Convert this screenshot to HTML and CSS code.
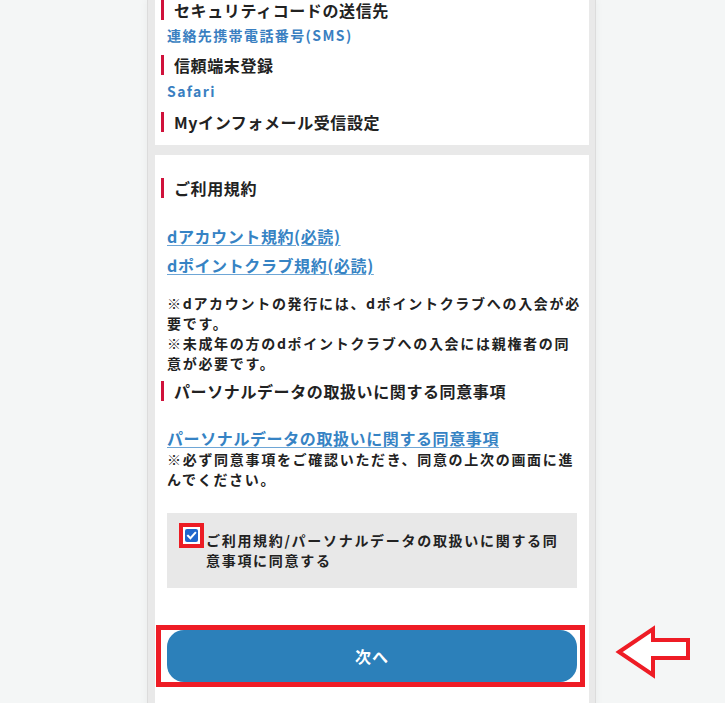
FILE: index.html
```html
<!DOCTYPE html>
<html lang="ja">
<head>
<meta charset="utf-8">
<title>dアカウント 確認</title>
<link rel="stylesheet" href="styles.css">
</head>
<body>
<div class="page">
  <div class="wrap">
    <section class="card card-info">
      <h2 class="head head-first">セキュリティコードの送信先</h2>
      <p class="val val-first">連絡先携帯電話番号(SMS)</p>
      <h2 class="head head-second">信頼端末登録</h2>
      <p class="val">Safari</p>
      <h2 class="head">Myインフォメール受信設定</h2>
    </section>
    <section class="card card-terms">
      <h2 class="head terms-head">ご利用規約</h2>
      <ul class="links">
        <li><a class="link" href="#">dアカウント規約(必読)</a></li>
        <li><a class="link" href="#">dポイントクラブ規約(必読)</a></li>
      </ul>
      <p class="note note-terms">※dアカウントの発行には、dポイントクラブへの入会が必要です。<br>※未成年の方のdポイントクラブへの入会には親権者の同意が必要です。</p>
      <h2 class="head personal-head">パーソナルデータの取扱いに関する同意事項</h2>
      <a class="link link-personal" href="#">パーソナルデータの取扱いに関する同意事項</a>
      <p class="note note-personal">※必ず同意事項をご確認いただき、同意の上次の画面に進んでください。</p>
      <label class="agree">
        <span class="ring">
          <svg class="check" viewBox="0 0 13 13" width="13" height="13" aria-hidden="true">
            <rect x="0" y="0" width="13" height="13" rx="2" fill="#1f66cc"/>
            <path d="M3 6.8 L5.4 9.2 L10.2 3.9" fill="none" stroke="#fff" stroke-width="2" stroke-linecap="square"/>
          </svg>
        </span>
        <span class="agree-text">ご利用規約/パーソナルデータの取扱いに関する同意事項に同意する</span>
      </label>
      <div class="next-frame">
        <button class="next" type="button">次へ</button>
      </div>
    </section>
  </div>
  <svg class="arrow" viewBox="600 615 100 85" width="100" height="85" aria-hidden="true">
    <polygon points="619,652 653,629 653,640 688,640 688,658 653,658 653,675" fill="#fff" stroke="#ee1c25" stroke-width="4" stroke-linejoin="miter" stroke-miterlimit="10"/>
  </svg>
</div>
</body>
</html>
```

FILE: styles.css
```css
html, body {
  margin: 0;
  padding: 0;
}
body {
  background: #f4f6f6;
  font-family: "Noto Sans CJK JP", "Noto Sans", sans-serif;
  color: #222;
  overflow: hidden;
}
.page {
  position: relative;
  min-height: 703px;
}
.wrap {
  margin-left: 147px;
  width: 449px;
  box-sizing: border-box;
  background: #e9e9e9;
  border-left: 1px solid #dcdcdc;
  border-right: 1px solid #dcdcdc;
  box-shadow: 0 0 8px rgba(0, 0, 0, 0.05);
  padding: 0 6px 0 7px;
  display: flex;
  flex-direction: column;
  gap: 10px;
}
.card {
  background: #fff;
  padding: 0 12px;
}
.card-info {
  padding-bottom: 13px;
}
.card-terms {
  padding-top: 23px;
  padding-bottom: 40px;
}
.head {
  margin: 11px 0 0 -6px;
  border-left: 3px solid #d0123b;
  padding-left: 10px;
  font-size: 16px;
  line-height: 20px;
  font-weight: 700;
  letter-spacing: 0.6px;
  color: #222;
}
.head-first {
  margin-top: 0;
}
.head-second {
  margin-top: 10px;
}
.terms-head {
  margin-top: 0;
}
.personal-head {
  margin-top: 8px;
}
.val {
  margin: 6px 0 0;
  font-size: 14px;
  line-height: 20px;
  font-weight: 700;
  letter-spacing: 1.4px;
  color: #3a7fc1;
}
.val-first {
  margin-top: 5px;
}
.links {
  list-style: none;
  margin: 24px 0 0;
  padding: 0;
}
.links li {
  line-height: 29px;
}
.link {
  font-size: 16px;
  font-weight: 700;
  letter-spacing: 0.6px;
  color: #3683c4;
  text-decoration: underline;
  text-decoration-color: #6ea6d6;
  text-underline-offset: 2px;
}
.link-personal {
  display: block;
  margin-top: 27px;
  line-height: 20px;
}
.note {
  margin: 0 -6px 0 0;
  font-size: 14px;
  line-height: 20px;
  font-weight: 700;
  letter-spacing: 1.7px;
  color: #222;
}
.note-terms {
  margin-top: 13px;
}
.note-personal {
  margin-top: 1px;
}
.agree {
  margin-top: 24px;
  background: #e8e8e8;
  padding: 10px 12px 18px;
  display: flex;
  align-items: flex-start;
  cursor: pointer;
}
.ring {
  flex: none;
  width: 25px;
  height: 25px;
  box-sizing: border-box;
  border: 4px solid #ec1c24;
  background: #fff;
  padding: 2px;
  display: flex;
}
.check {
  display: block;
}
.agree-text {
  margin: 7px 0 0 2px;
  font-size: 14px;
  line-height: 20px;
  font-weight: 700;
  letter-spacing: 1.7px;
  color: #222;
}
.next-frame {
  margin: 37px -8px 0 -11px;
  border: 5px solid #ee1c25;
  padding: 0 3px 0 6px;
}
.next {
  display: block;
  width: 100%;
  height: 52px;
  border: none;
  border-radius: 17px;
  background: #2c80ba;
  color: #fff;
  font-family: "Noto Sans CJK JP", "Noto Sans", sans-serif;
  font-size: 16px;
  font-weight: 700;
  letter-spacing: 1px;
  cursor: pointer;
}
.arrow {
  position: absolute;
  left: 600px;
  top: 615px;
}
```
